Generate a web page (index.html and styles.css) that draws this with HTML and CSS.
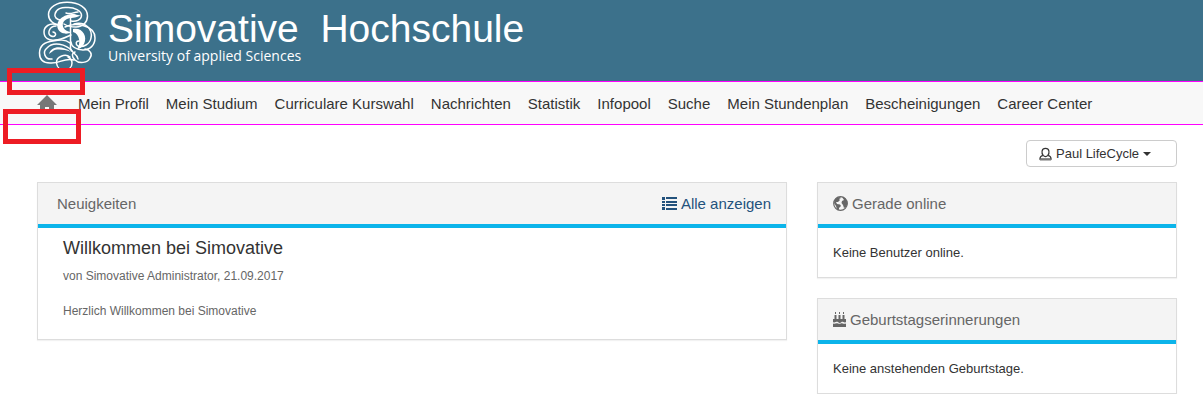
FILE: index.html
```
<!DOCTYPE html>
<html lang="de">
<head>
    <meta charset="UTF-8">
    <meta name="viewport" content="width=device-width, initial-scale=1.0">
    <title>Simovative Hochschule</title>
    <link rel="stylesheet" href="styles.css">
</head>
<body>
    <header class="header">
        <svg class="logo" viewBox="0 0 60 70" fill="none" stroke="#fff" stroke-width="1.5" stroke-linecap="round" aria-hidden="true">
            <path d="M24 25C16 25 11.500 20 11.500 14.500C11.500 7 20 2.300 30 2.300C42 2.300 50.500 8 50.500 16C50.500 22 46 27 39 27C34 27 30 26 27 24"/>
            <path d="M24 20C20 20 17 17 18 14C19 9 25 7 30 7.500C37 7 45 11 44.500 16C44 20 39 22 34 21"/>
            <path d="M29 13C35 15 36 12 41 12"/>
            <path d="M21 25C12 22 7 27 7 32C7 38 12 41 18 40C25 40 31 36 34 35"/>
            <path d="M19 26C12 26 10 34 14 36C18 38 21 33 16 32"/>
            <path d="M28 27C38 22 58 25 58 38C58 45 53 50 46 50C39 50 34 46 34 42"/>
            <path d="M37 24C48 21 56 29 54 38C53 44 46 48 41 46C38 44 39 41 42 41"/>
            <path d="M33.500 17V48C34 53 40 53 41 59"/>
            <path d="M33 43C28 39 22 40 16 41C8 42 2.500 46 2.500 53C2.500 60 7 63 13 63C23 64 27 57 37 60"/>
            <path d="M15 59C8 60 5 52 10 48C16 41 29 44 35 51"/>
            <path d="M48 49C53 50 56 54 53 58C51 63 42 64 38 60C34 56 35 53 38 52"/>
            <path d="M33 57C28 53 19 57 19.500 63C20 67 23 70 27 70C32 70 35 67 35 63C35 60 33 58 31 57"/>
            <path fill="#fff" stroke="none" d="M37 14C26 14 18 21 21 29C23 34 31 35 34 32C25 31 23 22 30 19C34 17 38 19 44 15C41 16 39 14 37 14Z"/>
            <path fill="#fff" stroke="none" d="M36 29C45 27 51 36 47 44C45 47 43 49 40 49C44 44 43 34 36 32Z"/>
            <path fill="#fff" stroke="none" d="M12 54C14 46 25 45 34 52C26 49 19 49 16 51C15 52 13 53 12 54Z"/>
        </svg>
        <div class="brand">
            <div class="brand-name">Simovative &nbsp;Hochschule</div>
            <div class="brand-sub">University of applied Sciences</div>
        </div>
    </header>

    <nav class="nav">
        <a class="nav-home" href="#" aria-label="Startseite">
            <svg class="icon-home" viewBox="0 0 20 18" fill="#777" aria-hidden="true">
                <path d="M10 0L20 10H17V18H12V12H8V18H3V10H0Z"/>
            </svg>
        </a>
        <a href="#">Mein Profil</a>
        <a href="#">Mein Studium</a>
        <a href="#">Curriculare Kurswahl</a>
        <a href="#">Nachrichten</a>
        <a href="#">Statistik</a>
        <a href="#">Infopool</a>
        <a href="#">Suche</a>
        <a href="#">Mein Stundenplan</a>
        <a href="#">Bescheinigungen</a>
        <a href="#">Career Center</a>
        <span class="mark mark-top"></span>
        <span class="mark mark-bottom"></span>
    </nav>

    <div class="toolbar">
        <button class="user-button" type="button">
            <svg class="icon-user" viewBox="0 0 14 14" fill="none" stroke="#333" stroke-width="1.3" aria-hidden="true">
                <path d="M4.500 8.500C2.500 6 2.500 1 7 1C11.500 1 11.500 6 9.500 8.500C8 10 6 10 4.500 8.500C2 9 1 10 1 12.500H13C13 10 12 9 9.500 8.500"/>
                <path d="M1 13H13" stroke="#777" stroke-width="2"/>
            </svg>
            <span>Paul LifeCycle</span>
            <span class="caret"></span>
        </button>
    </div>

    <main class="content">
        <section class="panel">
            <div class="panel-header panel-header-news">
                <h2>Neuigkeiten</h2>
                <a class="show-all" href="#">
                    <svg class="icon-list" viewBox="0 0 15 13" fill="#23527c" aria-hidden="true">
                        <path d="M0 0H3V3H0ZM4 0H15V2H4ZM0 4H3V6H0ZM4 4H15V6H4ZM0 7H3V9H0ZM4 7H15V9H4ZM0 10H3V13H0ZM4 11H15V13H4Z"/>
                    </svg>
                    Alle anzeigen
                </a>
            </div>
            <article class="news">
                <h3>Willkommen bei Simovative</h3>
                <p class="news-meta">von Simovative Administrator, 21.09.2017</p>
                <p>Herzlich Willkommen bei Simovative</p>
            </article>
        </section>

        <aside class="sidebar">
            <section class="panel">
                <div class="panel-header">
                    <svg class="icon-globe" viewBox="0 0 15 15" aria-hidden="true">
                        <circle cx="7.5" cy="7.5" r="6.8" fill="#f4f4f4" stroke="#666" stroke-width="1.2"/>
                        <path fill="#666" d="M4 1.500L7 1L8 2L6 3L7 4L5 6L3 6L4 8L7 8.500L8 10L6 12L6 14L4 13.500L3 10L1 7L1.500 4ZM9 1L12 2L14 5L14.500 8L13 11L11 12L10 9L8.500 7L9 5L11 4Z"/>
                    </svg>
                    <h2>Gerade online</h2>
                </div>
                <p class="panel-body">Keine Benutzer online.</p>
            </section>

            <section class="panel">
                <div class="panel-header">
                    <svg class="icon-cake" viewBox="0 0 13 15" fill="#666" aria-hidden="true">
                        <path d="M2 0H3V2H2ZM6 0H7V2H6ZM10 0H11V2H10ZM1.500 3H3.500V7H5.500V3H7.500V7H9.500V3H11.500V7H13V10C11 11.500 10 9 8.500 10C7 11.500 6 11 5 10C3 9 2 11.500 0 10V7H1.500ZM0 11.500C2 12.500 3 10.500 5 11.500C7 12.500 8 11 9 11.200C11 12 12 12 13 11.500V15H0Z"/>
                    </svg>
                    <h2>Geburtstagserinnerungen</h2>
                </div>
                <p class="panel-body">Keine anstehenden Geburtstage.</p>
            </section>
        </aside>
    </main>
</body>
</html>
```
FILE: styles.css
```
* {
    box-sizing: border-box;
}
body {
    margin: 0;
    font-family: "Liberation Sans", Arial, sans-serif;
    font-size: 13px;
    line-height: 20px;
    color: #333;
    background-color: #fff;
}
h2, h3, p {
    margin: 0;
    font-weight: normal;
}
a {
    color: #333;
    text-decoration: none;
}
svg {
    display: block;
    flex: none;
}
.header {
    display: flex;
    gap: 10px;
    height: 81px;
    padding-left: 37px;
    background-color: #3c718b;
    color: #fff;
}
.logo {
    width: 60px;
    height: 70px;
}
.brand {
    padding: 9px 0 0 1px;
}
.brand-name {
    font-size: 39px;
    line-height: 40px;
}
.brand-sub {
    font-family: "Open Sans", "Noto Sans", sans-serif;
    font-size: 14px;
    line-height: 14px;
}
.nav {
    position: relative;
    display: flex;
    align-items: center;
    gap: 17px;
    height: 44px;
    padding: 2px 37px 0;
    border-top: 1px solid #f0f;
    border-bottom: 1px solid #f0f;
    background-color: #f8f8f8;
    font-size: 15px;
    white-space: nowrap;
}
.nav-home {
    padding-right: 4px;
}
.icon-home {
    width: 20px;
    height: 18px;
}
/* red frames above and below the home link */
.mark {
    position: absolute;
    width: 78px;
    border: 5px solid #ed1c24;
}
.mark-top {
    top: -14px;
    left: 7px;
    height: 27px;
}
.mark-bottom {
    top: 27px;
    left: 3px;
    height: 35px;
}
.toolbar {
    display: flex;
    justify-content: flex-end;
    padding: 15px 26px;
}
.user-button {
    display: flex;
    align-items: center;
    gap: 4px;
    width: 151px;
    height: 27px;
    padding: 0 12px;
    border: 1px solid #ccc;
    border-radius: 4px;
    background-color: #fff;
    color: #333;
    font-family: inherit;
    font-size: 13px;
}
.icon-user {
    width: 13px;
    height: 14px;
}
.caret {
    border-top: 4px solid #333;
    border-left: 4px solid transparent;
    border-right: 4px solid transparent;
}
.content {
    display: grid;
    grid-template-columns: 1fr 360px;
    align-items: start;
    gap: 30px;
    padding: 0 26px 0 37px;
}
.sidebar {
    display: grid;
    gap: 20px;
}
.panel {
    border: 1px solid #ddd;
    box-shadow: 0 1px 1px rgba(0,0,0,0.05);
    background-color: #fff;
}
.panel-header {
    display: flex;
    align-items: center;
    gap: 4px;
    height: 45px;
    padding: 0 15px;
    border-bottom: 4px solid #0cb4ea;
    background-color: #f4f4f4;
    color: #666;
}
.panel-header h2 {
    font-size: 15px;
}
.panel-header-news {
    justify-content: space-between;
    padding-left: 19px;
}
.show-all {
    display: flex;
    align-items: center;
    gap: 4px;
    color: #23527c;
    font-size: 15px;
}
.icon-list {
    width: 15px;
    height: 13px;
}
.icon-globe {
    width: 15px;
    height: 15px;
}
.icon-cake {
    width: 13px;
    height: 15px;
}
.panel-body {
    padding: 15px 15px 14px;
}
.news {
    padding: 10px 25px 18px;
    color: #666;
    font-size: 12px;
}
.news h3 {
    color: #333;
    font-size: 18px;
}
.news-meta {
    padding: 8px 0 15px;
}
```
